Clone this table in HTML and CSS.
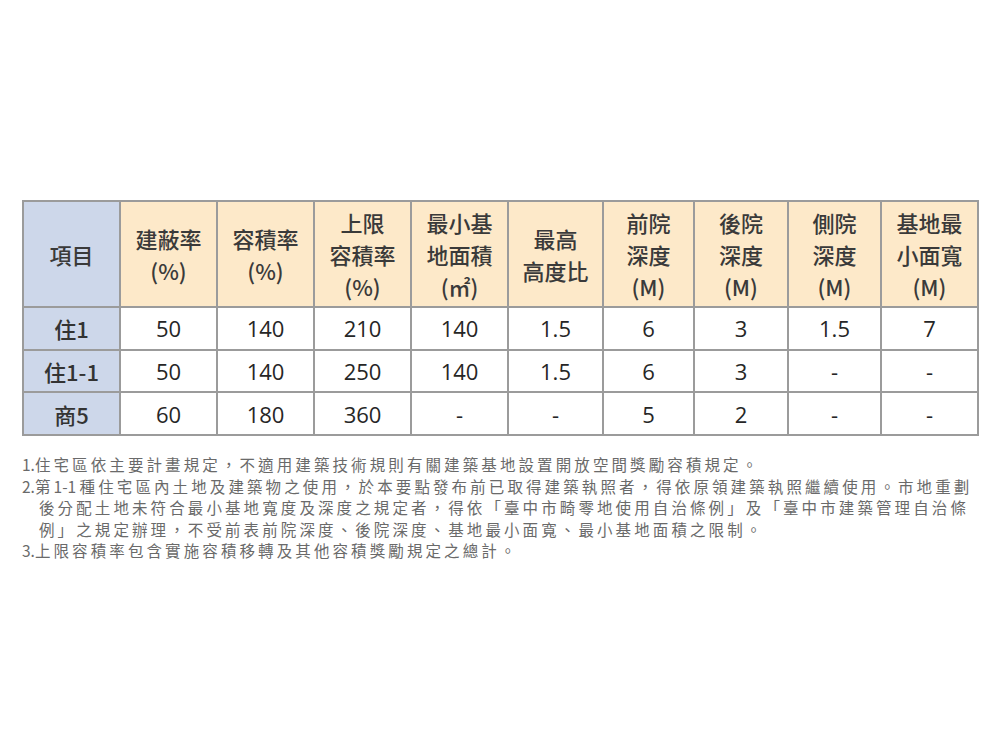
FILE: index.html
```html
<!DOCTYPE html>
<html lang="zh-Hant">
<head>
<meta charset="utf-8">
<title>使用分區管制</title>
<link rel="stylesheet" href="styles.css">
</head>
<body>
<div class="page">
  <table class="zoning">
    <colgroup>
      <col class="c97"><col class="c97"><col class="c97"><col class="c97"><col class="c97">
      <col class="c95"><col class="c91"><col class="c94"><col class="c93"><col class="c97">
    </colgroup>
    <thead>
      <tr>
        <th class="item">項目</th>
        <th>建蔽率<br>(%)</th>
        <th>容積率<br>(%)</th>
        <th>上限<br>容積率<br>(%)</th>
        <th>最小基<br>地面積<br>(㎡)</th>
        <th>最高<br>高度比</th>
        <th>前院<br>深度<br>(M)</th>
        <th>後院<br>深度<br>(M)</th>
        <th>側院<br>深度<br>(M)</th>
        <th>基地最<br>小面寬<br>(M)</th>
      </tr>
    </thead>
    <tbody>
      <tr>
        <td class="name">住1</td><td>50</td><td>140</td><td>210</td><td>140</td><td>1.5</td><td>6</td><td>3</td><td>1.5</td><td>7</td>
      </tr>
      <tr>
        <td class="name">住1-1</td><td>50</td><td>140</td><td>250</td><td>140</td><td>1.5</td><td>6</td><td>3</td><td>-</td><td>-</td>
      </tr>
      <tr>
        <td class="name">商5</td><td>60</td><td>180</td><td>360</td><td>-</td><td>-</td><td>5</td><td>2</td><td>-</td><td>-</td>
      </tr>
    </tbody>
  </table>
  <ol class="notes">
    <li><span class="num">1.</span>住宅區依主要計畫規定，不適用建築技術規則有關建築基地設置開放空間獎勵容積規定。</li>
    <li><span class="num">2.</span>第<span class="num">1-1 </span>種住宅區內土地及建築物之使用，於本要點發布前已取得建築執照者，得依原領建築執照繼續使用。市地重劃<br><span class="indent">後分配土地未符合最小基地寬度及深度之規定者，得依「臺中市畸零地使用自治條例」及「臺中市建築管理自治條</span><br><span class="indent">例」之規定辦理，不受前表前院深度、後院深度、基地最小面寬、最小基地面積之限制。</span></li>
    <li><span class="num">3.</span>上限容積率包含實施容積移轉及其他容積獎勵規定之總計。</li>
  </ol>
</div>
</body>
</html>
```
FILE: styles.css
```css
html, body {
  margin: 0;
  padding: 0;
  background: #ffffff;
}
.page {
  padding: 200px 0 0 22px;
}
.zoning {
  border-collapse: collapse;
  table-layout: fixed;
  width: 955px;
  font-family: "Noto Sans CJK TC", "Noto Sans", sans-serif;
}
.c97 { width: 97px; }
.c95 { width: 95px; }
.c94 { width: 94px; }
.c93 { width: 93px; }
.c91 { width: 91px; }
.zoning th,
.zoning td {
  border: 2px solid #9b9b9b;
  text-align: center;
  vertical-align: middle;
  padding: 0;
}
.zoning th {
  height: 104px;
  background: #fde9c9;
  color: #3a3a3a;
  font-size: 22px;
  font-weight: 500;
  line-height: 32px;
}
.zoning th.item {
  background: #cdd7ea;
}
.zoning td {
  height: 40.7px;
  background: #ffffff;
  color: #262626;
  font-family: "Open Sans", "Noto Sans CJK TC", sans-serif;
  font-size: 22px;
  line-height: 30px;
}
.zoning td.name {
  background: #cdd7ea;
  font-family: "Noto Sans CJK TC", "Noto Sans", sans-serif;
  font-weight: 500;
  color: #333333;
}
.notes {
  list-style: none;
  margin: 18px 0 0 0;
  padding: 0;
  font-family: "Noto Sans CJK TC", "Noto Sans", sans-serif;
  font-size: 15.5px;
  line-height: 21.6px;
  letter-spacing: 3.1px;
  color: #6a6a6a;
  white-space: nowrap;
}
.notes .num {
  letter-spacing: 0;
}
.notes .indent {
  display: inline-block;
  padding-left: 17px;
}
```
